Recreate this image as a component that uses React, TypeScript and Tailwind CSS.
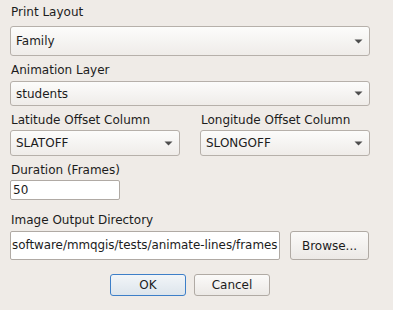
import React from "react";

const font = { fontFamily: '"DejaVu Sans", Verdana, sans-serif' };

function Arrow() {
  return (
    <svg width="9" height="5" viewBox="0 0 9 5" className="shrink-0">
      <path d="M0.5 0.5 L8.5 0.5 L4.5 4.5 Z" fill="#4d4d4d" />
    </svg>
  );
}

function Combo({ value, h }: { value: string; h: string }) {
  return (
    <div
      className={`${h} flex items-center justify-between rounded-[3px] border border-[#b6b0aa] bg-gradient-to-b from-[#fcfcfb] to-[#efece9] pl-[5px] pr-[6px]`}
    >
      <span>{value}</span>
      <Arrow />
    </div>
  );
}

function Label({ text, className = "" }: { text: string; className?: string }) {
  return <div className={`h-4 leading-4 pl-[1px] ${className}`}>{text}</div>;
}

const HomePage = () => {
  return (
    <div
      style={font}
      className="w-[393px] h-[310px] overflow-hidden bg-[#efebe7] text-[12px] text-[#1c1c1c] px-[10px] pt-[4px]"
    >
      <div className="w-[360px]">
        <Label text="Print Layout" />
        <div className="mt-[6px]">
          <Combo value="Family" h="h-[30px]" />
        </div>

        <Label text="Animation Layer" className="mt-[6px]" />
        <div className="mt-[3px]">
          <Combo value="students" h="h-[25px]" />
        </div>

        <div className="mt-[6px] grid grid-cols-2 gap-x-[20px]">
          <div>
            <Label text="Latitude Offset Column" />
            <div className="mt-[2px]">
              <Combo value="SLATOFF" h="h-[26px]" />
            </div>
          </div>
          <div>
            <Label text="Longitude Offset Column" />
            <div className="mt-[2px]">
              <Combo value="SLONGOFF" h="h-[26px]" />
            </div>
          </div>
        </div>

        <Label text="Duration (Frames)" className="mt-[6px]" />
        <div className="mt-[2px] w-[110px] h-[20px] flex items-center rounded-[2px] border border-[#b0aaa4] bg-white pl-[2px]">
          50
        </div>

        <Label text="Image Output Directory" className="mt-[12px]" />
        <div className="mt-[3px] flex gap-[10px]">
          {/* field is scrolled to the end of the path */}
          <div className="w-[270px] h-[29px] flex items-center whitespace-nowrap rounded-[2px] border border-[#b0aaa4] bg-white pl-[1px] text-[11.9px] tracking-[-0.02px]">
            software/mmqgis/tests/animate-lines/frames
          </div>
          <button className="w-[79px] h-[29px] rounded-[3px] border border-[#b0aaa4] bg-gradient-to-b from-[#fbfaf9] to-[#ece9e6] text-[#1c1c1c]">
            Browse...
          </button>
        </div>

        <div className="mt-[14px] flex justify-center gap-[8px]">
          <button className="w-[76px] h-[22px] rounded-[3px] border border-[#3d7fc8] bg-gradient-to-b from-[#f2f5f8] to-[#dde5ec] text-[#1c1c1c]">
            OK
          </button>
          <button className="w-[76px] h-[22px] rounded-[3px] border border-[#b0aaa4] bg-gradient-to-b from-[#fbfaf9] to-[#ece9e6] text-[#1c1c1c]">
            Cancel
          </button>
        </div>
      </div>
    </div>
  );
};

export default HomePage;
